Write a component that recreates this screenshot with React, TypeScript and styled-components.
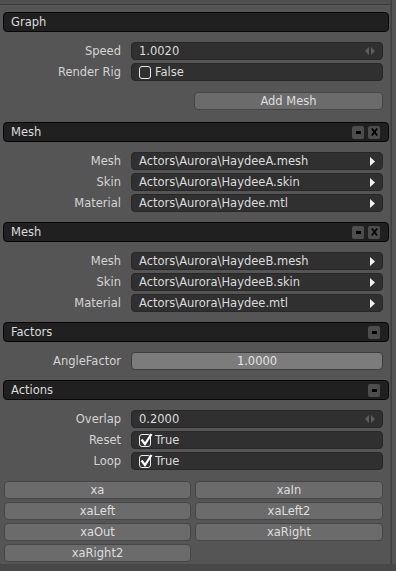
import React from 'react';
import styled, { createGlobalStyle } from 'styled-components';

const GlobalStyle = createGlobalStyle`
  html, body {
    margin: 0;
    padding: 0;
    background: #484848;
  }
  body {
    font-family: 'DejaVu Sans', 'Liberation Sans', sans-serif;
    font-size: 11px;
    color: #dadada;
  }
`;

type FieldRowData = {
  label: string;
  kind: 'spin' | 'check' | 'file' | 'slider';
  value: string;
  checked?: boolean;
};

type SectionData = {
  title: string;
  buttons: ('min' | 'close')[];
  rows: FieldRowData[];
};

const sections: SectionData[] = [
  {
    title: 'Mesh',
    buttons: ['min', 'close'],
    rows: [
      { label: 'Mesh', kind: 'file', value: 'Actors\\Aurora\\HaydeeA.mesh' },
      { label: 'Skin', kind: 'file', value: 'Actors\\Aurora\\HaydeeA.skin' },
      { label: 'Material', kind: 'file', value: 'Actors\\Aurora\\Haydee.mtl' },
    ],
  },
  {
    title: 'Mesh',
    buttons: ['min', 'close'],
    rows: [
      { label: 'Mesh', kind: 'file', value: 'Actors\\Aurora\\HaydeeB.mesh' },
      { label: 'Skin', kind: 'file', value: 'Actors\\Aurora\\HaydeeB.skin' },
      { label: 'Material', kind: 'file', value: 'Actors\\Aurora\\Haydee.mtl' },
    ],
  },
  {
    title: 'Factors',
    buttons: ['min'],
    rows: [{ label: 'AngleFactor', kind: 'slider', value: '1.0000' }],
  },
  {
    title: 'Actions',
    buttons: ['min'],
    rows: [
      { label: 'Overlap', kind: 'spin', value: '0.2000' },
      { label: 'Reset', kind: 'check', value: 'True', checked: true },
      { label: 'Loop', kind: 'check', value: 'True', checked: true },
    ],
  },
];

const actions = ['xa', 'xaIn', 'xaLeft', 'xaLeft2', 'xaOut', 'xaRight', 'xaRight2'];

function SpinArrows() {
  return (
    <svg width="10" height="8" viewBox="0 0 10 8">
      <polygon points="4,0 4,8 0,4" fill="#5e5e5e" />
      <polygon points="6,0 6,8 10,4" fill="#5e5e5e" />
    </svg>
  );
}

function ArrowRight() {
  return (
    <svg width="5" height="9" viewBox="0 0 5 9">
      <polygon points="0,0 5,4.5 0,9" fill="#f2f2f2" />
    </svg>
  );
}

function CheckBox({ checked }: { checked?: boolean }) {
  return (
    <StyledCheck>
      {checked && (
        <svg width="14" height="15" viewBox="0 0 14 15">
          <path d="M2.5 7.5 L6 12 L12.5 2" stroke="#ffffff" strokeWidth="2.2" fill="none" />
        </svg>
      )}
    </StyledCheck>
  );
}

function Field({ row }: { row: FieldRowData }) {
  if (row.kind === 'slider') {
    return <StyledSlider>{row.value}</StyledSlider>;
  }
  return (
    <StyledField>
      {row.kind === 'check' && <CheckBox checked={row.checked} />}
      <StyledValue>{row.value}</StyledValue>
      {row.kind === 'spin' && <SpinArrows />}
      {row.kind === 'file' && <ArrowRight />}
    </StyledField>
  );
}

function Row({ row }: { row: FieldRowData }) {
  return (
    <StyledRow>
      <StyledLabel>{row.label}</StyledLabel>
      <Field row={row} />
    </StyledRow>
  );
}

function Header({ title, buttons }: { title: string; buttons: ('min' | 'close')[] }) {
  return (
    <StyledHeader>
      <StyledHeaderTitle>{title}</StyledHeaderTitle>
      {buttons.map((b, i) => (
        <StyledHeaderButton key={i}>
          {b === 'min' ? (
            <svg width="5" height="3" viewBox="0 0 5 3">
              <rect x="0" y="0" width="5" height="3" fill="#000" />
            </svg>
          ) : (
            <svg width="7" height="8" viewBox="0 0 7 8">
              <path d="M0.8 0.5 L6.2 7.5 M6.2 0.5 L0.8 7.5" stroke="#000" strokeWidth="1.8" />
            </svg>
          )}
        </StyledHeaderButton>
      ))}
    </StyledHeader>
  );
}

function App() {
  return (
    <>
      <GlobalStyle />
      <StyledWindow>
        <StyledPanel>
          <StyledTopBar />
          <StyledSection>
            <Header title="Graph" buttons={[]} />
            <StyledBody>
              <Row row={{ label: 'Speed', kind: 'spin', value: '1.0020' }} />
              <Row row={{ label: 'Render Rig', kind: 'check', value: 'False' }} />
              <StyledAddRow>
                <StyledButton>Add Mesh</StyledButton>
              </StyledAddRow>
            </StyledBody>
          </StyledSection>
          {sections.map((s, i) => (
            <StyledSection key={i}>
              <Header title={s.title} buttons={s.buttons} />
              <StyledBody>
                {s.rows.map((r, j) => (
                  <Row key={j} row={r} />
                ))}
              </StyledBody>
            </StyledSection>
          ))}
          <StyledGrid>
            {actions.map((a) => (
              <StyledButton key={a}>{a}</StyledButton>
            ))}
          </StyledGrid>
        </StyledPanel>
        <StyledScrollbar />
      </StyledWindow>
    </>
  );
}

const StyledWindow = styled.div`
  display: flex;
  width: 396px;
  align-items: stretch;
`;

const StyledPanel = styled.div`
  width: 390px;
  background: #555555;
  padding-bottom: 2px;
`;

const StyledTopBar = styled.div`
  height: 4px;
  background: #505050;
  border-bottom: 1px solid #3c3c3c;
  margin-bottom: 7px;
`;

const StyledScrollbar = styled.div`
  width: 4px;
  background: #555555;
  border-left: 1px solid #3f3f3f;
  margin-left: 1px;
`;

const StyledSection = styled.div`
  display: flex;
  flex-direction: column;
`;

const StyledHeader = styled.div`
  display: flex;
  align-items: center;
  gap: 4px;
  height: 20px;
  box-sizing: border-box;
  margin: 0 1px 0 3px;
  padding: 0 8px 0 7px;
  background: #202020;
  border: 1px solid #070707;
  border-radius: 4px;
`;

const StyledHeaderTitle = styled.div`
  flex: 1;
  font-size: 11.5px;
  color: #dcdcdc;
`;

const StyledHeaderButton = styled.div`
  width: 12px;
  height: 13px;
  border-radius: 2px;
  background: #4d4d4d;
  display: flex;
  align-items: center;
  justify-content: center;
`;

const StyledBody = styled.div`
  display: flex;
  flex-direction: column;
  gap: 3px;
  padding: 10px 7px 10px 0;
`;

const StyledRow = styled.div`
  display: grid;
  grid-template-columns: 121px 1fr;
  column-gap: 10px;
  align-items: center;
`;

const StyledLabel = styled.div`
  text-align: right;
  color: #d4d4d4;
  font-size: 11.5px;
`;

const StyledField = styled.div`
  display: flex;
  align-items: center;
  gap: 4px;
  height: 18px;
  box-sizing: border-box;
  padding: 0 7px 0 7px;
  background: #303030;
  border: 1px solid #272727;
  border-radius: 4px;
`;

const StyledValue = styled.div`
  flex: 1;
  font-size: 11.5px;
  color: #dcdcdc;
  white-space: nowrap;
`;

const StyledCheck = styled.div`
  width: 12px;
  height: 13px;
  box-sizing: border-box;
  border: 1px solid #e8e8e8;
  border-radius: 3px;
  position: relative;
  margin-left: 0;

  svg {
    position: absolute;
    left: -1px;
    top: -3px;
  }
`;

const StyledSlider = styled.div`
  height: 18px;
  box-sizing: border-box;
  background: #7c7c7c;
  border: 1px solid #3d3d3d;
  border-radius: 4px;
  text-align: center;
  line-height: 16px;
  font-size: 11.5px;
  color: #e2e2e2;
`;

const StyledAddRow = styled.div`
  display: flex;
  justify-content: flex-end;
  margin-top: 8px;
  padding-bottom: 2px;

  & > * {
    width: 189px;
  }
`;

const StyledButton = styled.div`
  height: 18px;
  box-sizing: border-box;
  background: #6b6b6b;
  border: 1px solid #464646;
  border-radius: 4px;
  text-align: center;
  line-height: 16px;
  font-size: 11.5px;
  color: #dedede;
`;

const StyledGrid = styled.div`
  display: grid;
  grid-template-columns: 187px 188px;
  column-gap: 4px;
  row-gap: 3px;
  padding: 1px 7px 0 4px;
`;

export default App;
